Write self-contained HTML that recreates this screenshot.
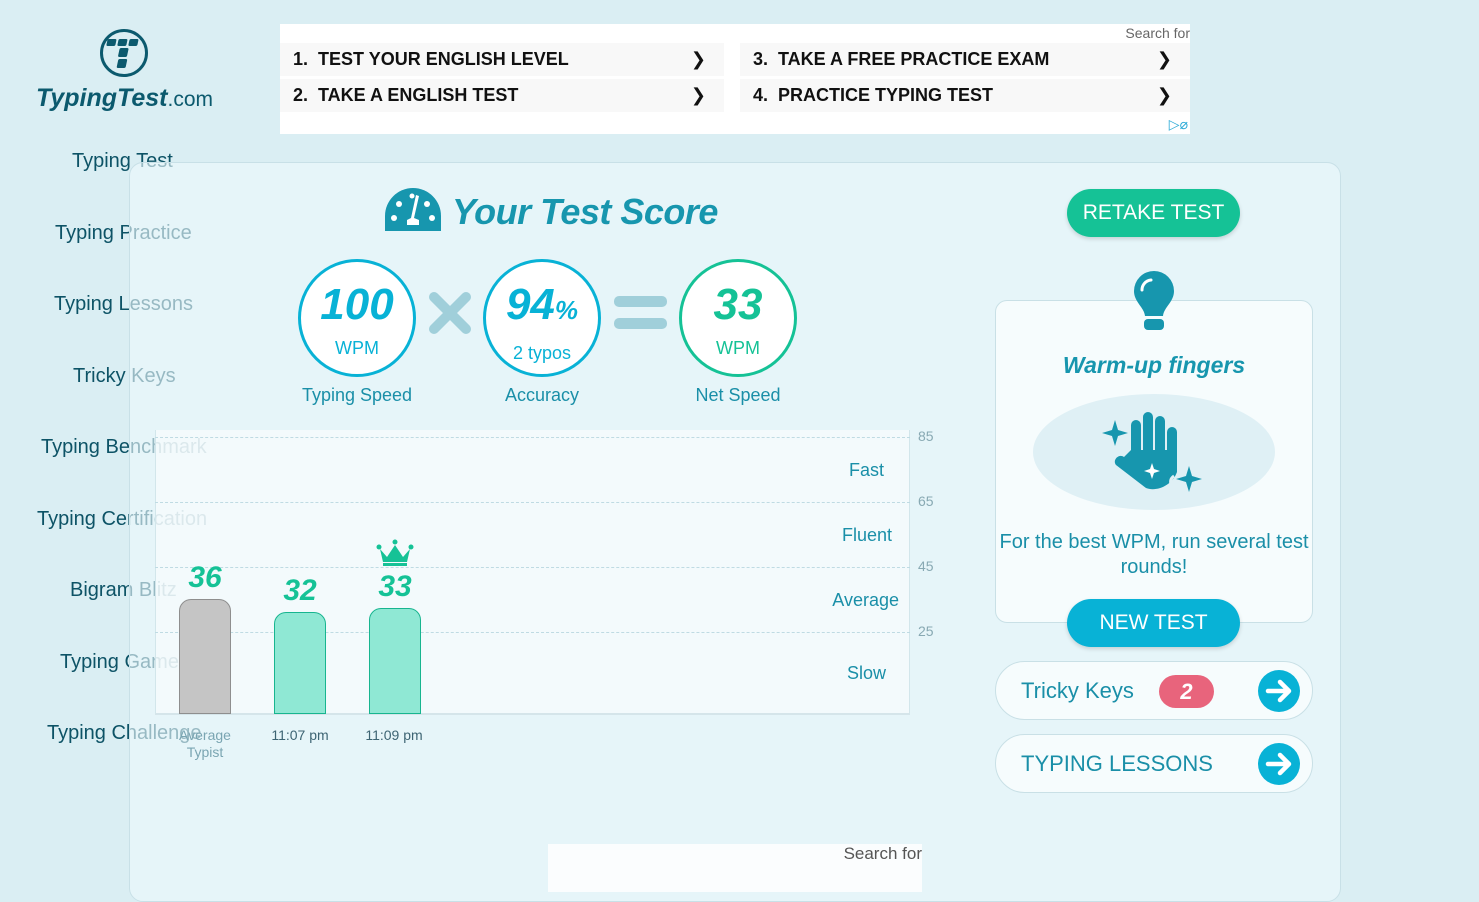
<!DOCTYPE html>
<html><head><meta charset="utf-8"><style>
*{box-sizing:border-box;margin:0;padding:0}
body{width:1479px;height:892px;overflow:hidden;background:#daeef3;font-family:"Liberation Sans",sans-serif;position:relative}
.abs{position:absolute}
.nav{position:absolute;color:#0d5366;font-size:20px;white-space:nowrap}
.card{position:absolute;left:129px;top:162px;width:1212px;height:740px;background:rgba(238,248,251,0.62);border:1px solid #c8e0e7;border-radius:14px}
.ad{position:absolute;left:280px;top:24px;width:910px;height:110px;background:#fff}
.adrow{position:absolute;height:33px;background:#f8f8f8;font-weight:bold;font-size:18px;color:#111;line-height:33px;padding-left:13px;font-family:"Liberation Sans Narrow","Liberation Sans",sans-serif}
.adrow span{position:absolute;right:18px;font-weight:normal;font-size:18px;font-family:"DejaVu Sans",sans-serif}
.circ{position:absolute;width:118px;height:118px;border-radius:50%;border:3px solid #08b2d6;background:#fff;text-align:center}
.big{font-style:italic;font-weight:bold;font-size:44px;margin-top:20px;line-height:46px}
.sub{font-size:18px;margin-top:10px}
.lab{position:absolute;font-size:18px;color:#1a8fa8;text-align:center;width:160px}
.grid{position:absolute;left:155px;width:755px;border-top:1px dashed #bfdbe3}
.gl{position:absolute;left:918px;font-size:14px;color:#88a9b3}
.zl{position:absolute;right:580px;font-size:18px;color:#1a8fa8}
.bar{position:absolute;width:52px;border-radius:12px 12px 0 0;border:1px solid #17b58f;background:#8fe8d4}
.num{position:absolute;font-style:italic;font-weight:bold;font-size:30px;color:#15c296;width:80px;text-align:center}
.tl{position:absolute;font-size:14px;color:#3d6473;width:100px;text-align:center}
.pill{position:absolute;left:995px;width:318px;height:59px;border-radius:30px;border:1px solid #c9e0e6;background:#f6fcfd;font-size:22px;color:#1a8fa8;line-height:57px;padding-left:25px}
.arr{position:absolute;right:12px;top:8px;width:42px;height:42px;border-radius:50%;background:#08b2d6}
</style></head><body>
<svg class="abs" style="left:99px;top:28px" width="50" height="50" viewBox="0 0 50 50"><circle cx="25" cy="25" r="22.5" fill="none" stroke="#0c5a6e" stroke-width="3"/><g fill="#0c5a6e"><rect x="11" y="11" width="9" height="7" rx="1.5" transform="skewX(-12)"/><rect x="22" y="11" width="9" height="7" rx="1.5" transform="skewX(-12)"/><rect x="33" y="11" width="9" height="7" rx="1.5" transform="skewX(-12)"/><rect x="25" y="20" width="9" height="9" rx="1.5" transform="skewX(-12)"/><rect x="26" y="31" width="9" height="9" rx="1.5" transform="skewX(-12)"/></g></svg>
<div class="abs" style="left:36px;top:84px;color:#0c5a6e;font-size:25px;font-style:italic;font-weight:bold">TypingTest<span style="font-style:normal;font-weight:normal;font-size:21px">.com</span></div>
<div class="nav" style="left:72px;top:150px">Typing Test</div>
<div class="nav" style="left:55px;top:222px">Typing Practice</div>
<div class="nav" style="left:54px;top:293px">Typing Lessons</div>
<div class="nav" style="left:73px;top:365px">Tricky Keys</div>
<div class="nav" style="left:41px;top:436px">Typing Benchmark</div>
<div class="nav" style="left:37px;top:508px">Typing Certification</div>
<div class="nav" style="left:70px;top:579px">Bigram Blitz</div>
<div class="nav" style="left:60px;top:651px">Typing Games</div>
<div class="nav" style="left:47px;top:722px">Typing Challenge</div>
<div class="ad">
<div class="abs" style="right:0;top:1px;font-size:14px;color:#666">Search for</div>
<div class="adrow" style="left:0;top:19px;width:444px">1.&nbsp; TEST YOUR ENGLISH LEVEL<span>&#x276F;</span></div>
<div class="adrow" style="left:0;top:55px;width:444px">2.&nbsp; TAKE A ENGLISH TEST<span>&#x276F;</span></div>
<div class="adrow" style="left:460px;top:19px;width:450px">3.&nbsp; TAKE A FREE PRACTICE EXAM<span>&#x276F;</span></div>
<div class="adrow" style="left:460px;top:55px;width:450px">4.&nbsp; PRACTICE TYPING TEST<span>&#x276F;</span></div>
<div class="abs" style="right:2px;top:92px;font-size:14px;color:#29a9d6">&#x25B7;&#x2300;</div>
</div>
<div class="card"></div>
<svg class="abs" style="left:385px;top:186px" width="56" height="45" viewBox="0 0 56 45"><path d="M0 45 L0 30 A28 28 0 0 1 56 30 L56 45 Z" fill="#1796ae"/><g fill="#fff"><circle cx="9" cy="32" r="3"/><circle cx="14" cy="18" r="3"/><circle cx="27" cy="10" r="2.5"/><circle cx="47" cy="32" r="3"/><circle cx="42" cy="18" r="3"/><path d="M31 9 L34 10 L29 32 L34 34 L34 39 L22 39 L22 34 L26 32 Z"/></g></svg>
<div class="abs" style="left:452px;top:191px;font-size:36px;font-style:italic;font-weight:bold;color:#1796ae;letter-spacing:-0.5px">Your Test Score</div>
<div class="circ" style="left:298px;top:259px;color:#08b2d6"><div class="big">100</div><div class="sub">WPM</div></div>
<div class="circ" style="left:483px;top:259px;color:#08b2d6"><div class="big">94<span style="font-size:26px">%</span></div><div class="sub">2 typos</div></div>
<div class="circ" style="left:679px;top:259px;color:#15c296;border-color:#15c296"><div class="big">33</div><div class="sub">WPM</div></div>
<svg class="abs" style="left:428px;top:291px" width="44" height="44"><path d="M6 6 L38 38 M38 6 L6 38" stroke="#a0cfda" stroke-width="10" stroke-linecap="round"/></svg>
<div class="abs" style="left:614px;top:296px;width:53px;height:11px;border-radius:5px;background:#a0cfda"></div>
<div class="abs" style="left:614px;top:318px;width:53px;height:11px;border-radius:5px;background:#a0cfda"></div>
<div class="lab" style="left:277px;top:385px">Typing Speed</div>
<div class="lab" style="left:462px;top:385px">Accuracy</div>
<div class="lab" style="left:658px;top:385px">Net Speed</div>
<div class="abs" style="left:155px;top:430px;width:755px;height:285px;background:rgba(248,252,253,0.7);border:1px solid #d2e6eb;border-top:none"></div>
<div class="grid" style="top:437px"></div><div class="grid" style="top:502px"></div><div class="grid" style="top:567px"></div><div class="grid" style="top:632px"></div>
<div class="abs" style="left:155px;top:713px;width:755px;border-top:2px solid #d5e5ea"></div>
<div class="gl" style="top:428px">85</div><div class="gl" style="top:493px">65</div><div class="gl" style="top:558px">45</div><div class="gl" style="top:623px">25</div>
<div class="zl" style="top:460px;right:595px">Fast</div><div class="zl" style="top:525px;right:587px">Fluent</div><div class="zl" style="top:590px">Average</div><div class="zl" style="top:663px;right:593px">Slow</div>
<div class="bar" style="left:179px;top:599px;height:115px;background:#c5c5c5;border-color:#8e8e8e"></div>
<div class="bar" style="left:274px;top:612px;height:102px"></div>
<div class="bar" style="left:369px;top:608px;height:106px"></div>
<div class="num" style="left:165px;top:561px">36</div>
<div class="num" style="left:260px;top:574px">32</div>
<div class="num" style="left:355px;top:570px">33</div>
<svg class="abs" style="left:376px;top:539px" width="38" height="28" viewBox="0 0 38 28"><g fill="#15c296"><circle cx="3" cy="8" r="2.5"/><circle cx="19" cy="3" r="2.5"/><circle cx="35" cy="8" r="2.5"/><path d="M4 10 L11 18 L19 6 L27 18 L34 10 L31 23 L7 23 Z"/><rect x="7" y="24" width="24" height="3"/></g></svg>
<div class="tl" style="left:155px;top:727px;color:#7aa5b2;line-height:17px">Average<br>Typist</div>
<div class="tl" style="left:250px;top:727px">11:07 pm</div>
<div class="tl" style="left:344px;top:727px">11:09 pm</div>
<div class="abs" style="left:1067px;top:189px;width:173px;height:48px;border-radius:24px;background:#15c296;color:#fff;font-size:21px;text-align:center;line-height:48px;box-shadow:0 2px 4px rgba(0,0,0,.15)">RETAKE TEST</div>
<div class="abs" style="left:995px;top:300px;width:318px;height:323px;border:1px solid #c9e0e6;border-radius:12px;background:#f6fcfd"></div>
<svg class="abs" style="left:1133px;top:270px" width="42" height="62" viewBox="0 0 42 62"><path d="M21 1 A20 20 0 0 1 41 21 C41 32 31 37 30 46 L12 46 C11 37 1 32 1 21 A20 20 0 0 1 21 1Z" fill="#1796ae"/><rect x="11" y="49" width="20" height="11" rx="4" fill="#1796ae"/><path d="M9 20 A10 10 0 0 1 18 10" stroke="#fff" stroke-width="3" fill="none" stroke-linecap="round"/></svg>
<div class="abs" style="left:995px;top:352px;width:318px;text-align:center;font-size:23px;font-style:italic;font-weight:bold;color:#1796ae">Warm-up fingers</div>
<div class="abs" style="left:1033px;top:394px;width:242px;height:116px;border-radius:50%;background:#dff0f5"></div>
<svg class="abs" style="left:1102px;top:410px" width="104" height="84" viewBox="0 0 104 84"><g fill="#1796ae"><path d="M13 10 L16 20 L26 23 L16 26 L13 36 L10 26 L0 23 L10 20Z"/><rect x="29" y="10" width="10" height="44" rx="5"/><rect x="41" y="2" width="10" height="52" rx="5"/><rect x="53" y="6" width="10" height="48" rx="5"/><rect x="65" y="17" width="10" height="42" rx="5"/><path d="M29 40 L75 40 L75 62 C70 76 54 82 44 78 L14 55 C10 50 17 43 22 47 Z"/><path d="M87 56 L90 66 L100 69 L90 72 L87 82 L84 72 L74 69 L84 66Z"/></g><path d="M72 66 a7 7 0 0 0 0 12" stroke="#dff0f5" stroke-width="3" fill="none"/><path d="M50 53 L52 59 L58 61 L52 63 L50 69 L48 63 L42 61 L48 59Z" fill="#fff"/></svg>
<div class="abs" style="left:995px;top:530px;width:318px;text-align:center;font-size:20px;color:#1a8fa8;line-height:25px">For the best WPM, run several test rounds!</div>
<div class="abs" style="left:1067px;top:599px;width:173px;height:48px;border-radius:24px;background:#08b2d6;color:#fff;font-size:21px;text-align:center;line-height:48px;box-shadow:0 2px 4px rgba(0,0,0,.15)">NEW TEST</div>
<div class="pill" style="top:661px">Tricky Keys<div class="abs" style="left:163px;top:13px;width:55px;height:33px;border-radius:17px;background:#e8647c;color:#fff;font-weight:bold;font-style:italic;text-align:center;line-height:33px;font-size:22px">2</div><svg class="arr" viewBox="0 0 42 42"><path d="M10 21 H31 M22 12 L31 21 L22 30" stroke="#fff" stroke-width="4.5" fill="none" stroke-linecap="round" stroke-linejoin="round"/></svg></div>
<div class="pill" style="top:734px">TYPING LESSONS<svg class="arr" viewBox="0 0 42 42"><path d="M10 21 H31 M22 12 L31 21 L22 30" stroke="#fff" stroke-width="4.5" fill="none" stroke-linecap="round" stroke-linejoin="round"/></svg></div>
<div class="abs" style="left:548px;top:844px;width:374px;height:48px;background:#fbfdfe"><div class="abs" style="right:0;top:0;font-size:17px;color:#555">Search for</div></div>
</body></html>
